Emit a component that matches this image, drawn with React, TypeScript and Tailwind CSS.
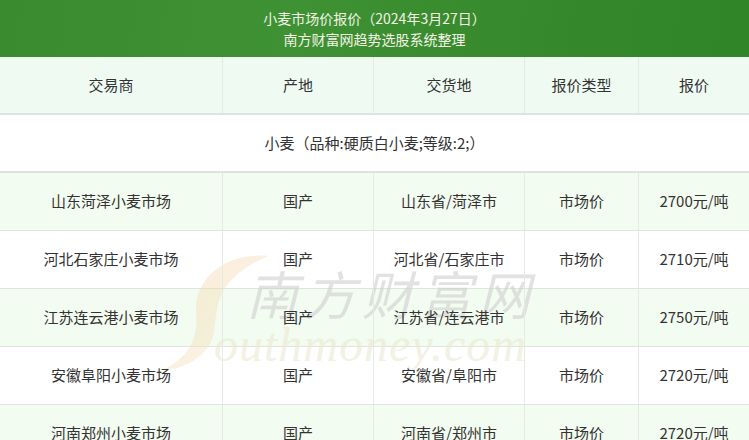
import React from "react";

const rows = [
  { trader: "山东菏泽小麦市场", origin: "国产", place: "山东省/菏泽市", type: "市场价", price: "2700元/吨" },
  { trader: "河北石家庄小麦市场", origin: "国产", place: "河北省/石家庄市", type: "市场价", price: "2710元/吨" },
  { trader: "江苏连云港小麦市场", origin: "国产", place: "江苏省/连云港市", type: "市场价", price: "2750元/吨" },
  { trader: "安徽阜阳小麦市场", origin: "国产", place: "安徽省/阜阳市", type: "市场价", price: "2720元/吨" },
  { trader: "河南郑州小麦市场", origin: "国产", place: "河南省/郑州市", type: "市场价", price: "2720元/吨" },
];

const cols = "grid grid-cols-[223px_151px_151px_114px_110px]";
const cell = "relative z-10 flex items-center justify-center border-r border-[#e3ebe3] last:border-r-0";

export default function App() {
  return (
    <div
      className="relative w-[749px] h-[440px] overflow-hidden bg-white text-[15px] text-[#333]"
      style={{ fontFamily: '"Noto Sans CJK SC", "Noto Sans", sans-serif' }}
    >
      <div className="h-[57px] flex flex-col items-center justify-center gap-[2px] bg-[linear-gradient(100deg,#3a8a30_0%,#3f9233_40%,#36892c_70%,#2f8528_100%)] text-[#f3f3e6] text-[14px] leading-[19px]">
        <div>小麦市场价报价（2024年3月27日）</div>
        <div>南方财富网趋势选股系统整理</div>
      </div>

      <div className={`${cols} h-[58px] bg-[#effbf2] border-b-2 border-[#dfe3df]`}>
        <div className={cell}>交易商</div>
        <div className={cell}>产地</div>
        <div className={cell}>交货地</div>
        <div className={cell}>报价类型</div>
        <div className={cell}>报价</div>
      </div>

      <div className="h-[58px] flex items-center justify-center border-b-2 border-[#dfe3df] bg-white">
        小麦（品种:硬质白小麦;等级:2;）
      </div>

      {rows.map((r, i) => (
        <div
          key={i}
          className={`${cols} h-[58px] border-b border-[#e0e4e0] ${i % 2 === 0 ? "bg-[#f3fcf0]" : "bg-white"}`}
        >
          <div className={cell}>{r.trader}</div>
          <div className={cell}>{r.origin}</div>
          <div className={cell}>{r.place}</div>
          <div className={cell}>{r.type}</div>
          <div className={cell}>{r.price}</div>
        </div>
      ))}

      {/* watermark, sits under the cell text */}
      <div className="pointer-events-none absolute z-[5] left-[150px] top-[250px] w-[420px] h-[125px] opacity-60">
        <svg className="absolute left-0 top-0" width="130" height="125" viewBox="0 0 130 125">
          <defs>
            <linearGradient id="sw" x1="0" y1="0" x2="1" y2="1">
              <stop offset="0" stopColor="#f6d8a8" stopOpacity="0.8" />
              <stop offset="1" stopColor="#f3e4c4" stopOpacity="0.6" />
            </linearGradient>
          </defs>
          <path
            d="M118 6 C74 2 44 30 46 62 C48 86 42 106 12 120 C34 120 60 106 64 82 C68 56 64 30 118 6 Z"
            fill="url(#sw)"
          />
        </svg>
        <div className="absolute left-[96px] top-[14px] text-[52px] leading-[58px] tracking-[6px] text-[#cfcfcf] italic">
          南方财富网
        </div>
        <div
          className="absolute left-[64px] top-[70px] text-[48px] leading-[50px] italic text-[#ebe9d2] tracking-[1px]"
          style={{ fontFamily: '"Liberation Serif", serif' }}
        >
          outhmoney.com
        </div>
      </div>
    </div>
  );
}
